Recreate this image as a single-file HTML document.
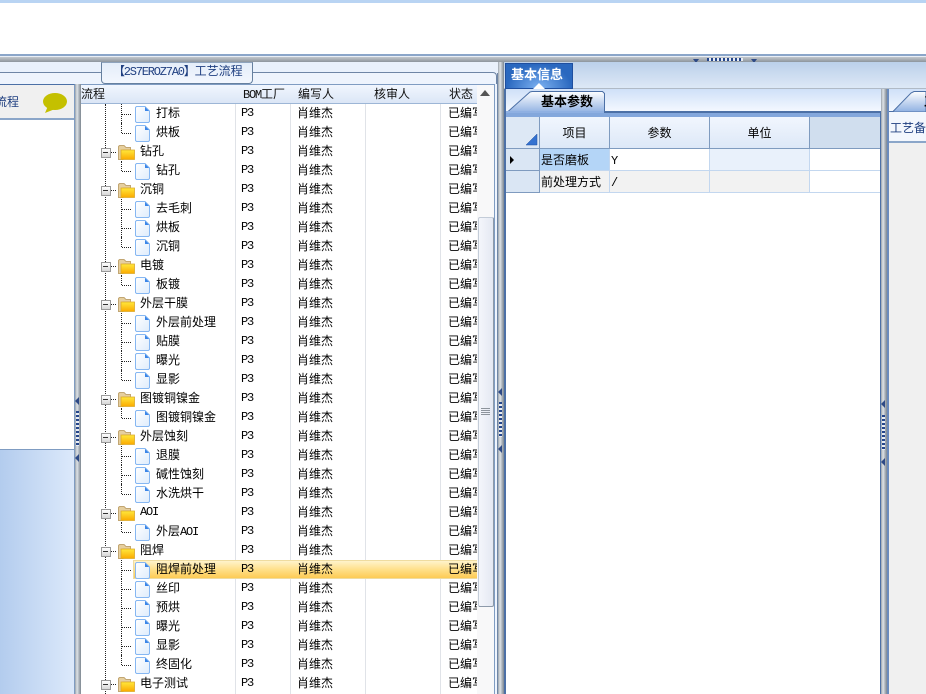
<!DOCTYPE html>
<html><head><meta charset="utf-8">
<style>
html,body{margin:0;padding:0;background:#fff}
body{width:926px;height:694px;position:relative;overflow:hidden;font:12px/19px "WenQuanYi Zen Hei","Noto Sans CJK SC",sans-serif;color:#000}
.a{position:absolute}
.m{font-family:"Liberation Mono",monospace;font-size:12px;letter-spacing:-1.2px}
#rows{left:0;top:104px;width:477px;height:590px;overflow:hidden;clip-path:inset(0 0 0 81px);background:#fff}
.r{position:relative;height:19px;white-space:nowrap}
.r>*{position:absolute}
.r svg{overflow:visible}
.n{top:-1px}
.r.d .n,.r.l .n{left:156px}
.r.f .n{left:140px}
.p{left:241px;top:0;font-family:"Liberation Mono",monospace;font-size:12px;letter-spacing:-1.2px}
.w{left:297px;top:-1px}
.s{left:448px;top:-1px}
.r.d svg,.r.l svg{left:135px;top:2px;width:15px;height:17px}
.r.f svg{left:118px;top:3px;width:17px;height:15px}
.r.d::before{content:"";position:absolute;left:121px;top:0;height:19px;border-left:1px dotted #222}
.r.l::before{content:"";position:absolute;left:121px;top:0;height:10px;border-left:1px dotted #222}
.r.d::after,.r.l::after{content:"";position:absolute;left:122px;top:10px;width:9px;border-top:1px dotted #222}
.r.f::before{content:"";position:absolute;left:101px;top:6px;width:8px;height:8px;border:1px solid #9a9a9a;background:linear-gradient(#fff,#d8d8d8);z-index:1}
.r.f::after{content:"";position:absolute;left:111px;top:10px;width:5px;border-top:1px dotted #222}
.r.f b{left:103px;top:10px;width:5px;height:1px;background:#333;z-index:2}
.hl{left:133px;top:0;width:344px;height:19px;background:linear-gradient(#fff3cc,#ffe08a 50%,#fdcb55);border:solid #efdca0;border-width:1px 0 1px 1px;box-sizing:border-box}
.sep{top:104px;width:1px;height:590px;background:#e0e3e8}
.hd{top:85px;height:18px;background:linear-gradient(#f1f6fe,#dbe6f6);border-bottom:1px solid #9db6d6;border-right:1px solid #9db6d6;line-height:17px;text-align:center;color:#111}
.split{background:linear-gradient(90deg,#9aa3ac,#dfe3e7 35%,#a8b0b8 70%,#7d8790)}
.dots{width:3px;background:repeating-linear-gradient(#24468c 0 2px,#e8edf4 2px 4px)}
.cell{border-right:1px solid #c3d7ef;border-bottom:1px solid #c3d7ef;box-sizing:border-box;line-height:21px;padding-left:1px}
.gh{background:linear-gradient(#f1f6fe,#dde8f7);border-right:1px solid #7f9bbf;border-bottom:1px solid #7f9bbf;box-sizing:border-box;text-align:center;line-height:31px}
</style></head>
<body>
<svg width="0" height="0" style="position:absolute">
<defs>
<linearGradient id="dg" x1="0" y1="0" x2="1" y2="1"><stop offset="0" stop-color="#fff"/><stop offset="1" stop-color="#deecfc"/></linearGradient>
<linearGradient id="fg" x1="0" y1="0" x2="0" y2="1"><stop offset="0" stop-color="#ffe83c"/><stop offset="1" stop-color="#fbaa00"/></linearGradient>
<linearGradient id="tb" x1="0" y1="0" x2="0" y2="1"><stop offset="0" stop-color="#fff"/><stop offset="1" stop-color="#8fb0e2"/></linearGradient>
<symbol id="doc" viewBox="0 0 15 17"><path d="M1.500.5H10L14.500 5V15.500L13.500 16.500H1.500L.5 15.500V1.500Z" fill="url(#dg)" stroke="#86b7f2"/><path d="M10 1V5H14Z" fill="#3b86e8"/></symbol>
<symbol id="fol" viewBox="0 0 17 15"><path d="M.5 14.500V1.500L1.500.5H6L8 2.500H12.500V5H5V14.500Z" fill="#e6cf9f" stroke="#c2a672"/><path d="M3 5H16.500V14.500H3Z" fill="url(#fg)" stroke="#dba92a" stroke-width=".8"/></symbol>
</defs></svg>

<!-- top strip -->
<div class="a" style="left:0;top:0;width:926px;height:3px;background:#b9d4f3"></div>
<div class="a" style="left:0;top:54px;width:926px;height:2px;background:#8ba6c9"></div>
<div class="a" style="left:0;top:56px;width:926px;height:1px;background:#e8eef6"></div>
<div class="a" style="left:0;top:57px;width:926px;height:5px;background:linear-gradient(#c2c7cc,#8d959d)"></div>
<div class="a" style="left:693px;top:59px;border:solid transparent;border-width:4px 3px 0;border-top-color:#2e4a86"></div>
<div class="a" style="left:707px;top:58px;width:36px;height:3px;background:repeating-linear-gradient(90deg,#24468c 0 2px,#e8edf4 2px 4px)"></div>
<div class="a" style="left:751px;top:59px;border:solid transparent;border-width:4px 3px 0;border-top-color:#2e4a86"></div>

<!-- mid panel background -->
<div class="a" style="left:0;top:62px;width:498px;height:632px;background:#e9f1fc"></div>
<div class="a" style="left:0;top:72px;width:497px;height:12px;border-top:1px solid #6f86a6;border-right:1px solid #6f86a6;border-top-right-radius:4px;box-sizing:border-box;background:#eef4fd"></div>
<div class="a" style="left:101px;top:62px;width:152px;height:22px;box-sizing:border-box;border:1px solid #66809f;border-top-color:#8ea3bd;border-radius:0 0 4px 4px;background:linear-gradient(#e4edf9,#f3f7fe);color:#1f3f80;line-height:15px;padding-left:11px;white-space:nowrap;z-index:3"><span class="m">【2S7EROZ7A0】</span>工艺流程</div>

<!-- left panel -->
<div class="a" style="left:0;top:84px;width:75px;height:366px;background:#fff;border-right:1px solid #7f9cc2;box-sizing:border-box;border-top:1px solid #4c70a6"></div>
<div class="a" style="left:0;top:85px;width:74px;height:33px;background:#f0f0f0;border-bottom:2px solid #8ba6c9;box-sizing:content-box;color:#1f3f80;line-height:33px;overflow:hidden"><span class="a" style="left:-5px;top:0">流程</span></div>
<svg class="a" style="left:42px;top:92px" width="26" height="22" viewBox="0 0 26 22"><ellipse cx="13" cy="9.500" rx="12" ry="8.500" fill="#c4c000"/><path d="M6 14L3 21L13 17Z" fill="#c4c000"/></svg>
<div class="a" style="left:0;top:449px;width:74px;height:1px;background:#7f9cc2"></div>
<div class="a" style="left:0;top:450px;width:74px;height:244px;background:linear-gradient(90deg,#b3ccee,#dce9fb)"></div>
<div class="a" style="left:74px;top:450px;width:1px;height:244px;background:#7f9cc2"></div>
<div class="a split" style="left:75px;top:84px;width:6px;height:610px"></div>
<div class="a" style="left:75px;top:397px;border:solid transparent;border-width:4px 4px 4px 0;border-right-color:#2e4a86"></div>
<div class="a dots" style="left:76px;top:411px;height:35px"></div>
<div class="a" style="left:75px;top:454px;border:solid transparent;border-width:4px 4px 4px 0;border-right-color:#2e4a86"></div>

<!-- grid header -->
<div class="a" style="left:81px;top:84px;width:413px;height:1px;background:#7f9cc2"></div>
<div class="a hd" style="left:81px;width:155px;text-align:left">流程</div>
<div class="a hd" style="left:236px;width:55px;text-align:left;text-indent:7px;white-space:nowrap"><span class="m">BOM</span>工厂</div>
<div class="a hd" style="left:291px;width:75px;text-align:left;text-indent:7px">编写人</div>
<div class="a hd" style="left:366px;width:75px;text-align:left;text-indent:8px">核审人</div>
<div class="a hd" style="left:441px;width:36px;border-right:0;text-align:left;text-indent:8px">状态</div>

<!-- rows -->
<div class="a" id="rows">
<div class="a" style="left:105px;top:0;height:590px;border-left:1px dotted #222"></div>
<div class="r d"><svg><use href="#doc"/></svg><span class="n">打标</span><span class="p">P3</span><span class="w">肖维杰</span><span class="s">已编写</span></div>
<div class="r l"><svg><use href="#doc"/></svg><span class="n">烘板</span><span class="p">P3</span><span class="w">肖维杰</span><span class="s">已编写</span></div>
<div class="r f"><b></b><svg><use href="#fol"/></svg><span class="n">钻孔</span><span class="p">P3</span><span class="w">肖维杰</span><span class="s">已编写</span></div>
<div class="r l"><svg><use href="#doc"/></svg><span class="n">钻孔</span><span class="p">P3</span><span class="w">肖维杰</span><span class="s">已编写</span></div>
<div class="r f"><b></b><svg><use href="#fol"/></svg><span class="n">沉铜</span><span class="p">P3</span><span class="w">肖维杰</span><span class="s">已编写</span></div>
<div class="r d"><svg><use href="#doc"/></svg><span class="n">去毛刺</span><span class="p">P3</span><span class="w">肖维杰</span><span class="s">已编写</span></div>
<div class="r d"><svg><use href="#doc"/></svg><span class="n">烘板</span><span class="p">P3</span><span class="w">肖维杰</span><span class="s">已编写</span></div>
<div class="r l"><svg><use href="#doc"/></svg><span class="n">沉铜</span><span class="p">P3</span><span class="w">肖维杰</span><span class="s">已编写</span></div>
<div class="r f"><b></b><svg><use href="#fol"/></svg><span class="n">电镀</span><span class="p">P3</span><span class="w">肖维杰</span><span class="s">已编写</span></div>
<div class="r l"><svg><use href="#doc"/></svg><span class="n">板镀</span><span class="p">P3</span><span class="w">肖维杰</span><span class="s">已编写</span></div>
<div class="r f"><b></b><svg><use href="#fol"/></svg><span class="n">外层干膜</span><span class="p">P3</span><span class="w">肖维杰</span><span class="s">已编写</span></div>
<div class="r d"><svg><use href="#doc"/></svg><span class="n">外层前处理</span><span class="p">P3</span><span class="w">肖维杰</span><span class="s">已编写</span></div>
<div class="r d"><svg><use href="#doc"/></svg><span class="n">贴膜</span><span class="p">P3</span><span class="w">肖维杰</span><span class="s">已编写</span></div>
<div class="r d"><svg><use href="#doc"/></svg><span class="n">曝光</span><span class="p">P3</span><span class="w">肖维杰</span><span class="s">已编写</span></div>
<div class="r l"><svg><use href="#doc"/></svg><span class="n">显影</span><span class="p">P3</span><span class="w">肖维杰</span><span class="s">已编写</span></div>
<div class="r f"><b></b><svg><use href="#fol"/></svg><span class="n">图镀铜镍金</span><span class="p">P3</span><span class="w">肖维杰</span><span class="s">已编写</span></div>
<div class="r l"><svg><use href="#doc"/></svg><span class="n">图镀铜镍金</span><span class="p">P3</span><span class="w">肖维杰</span><span class="s">已编写</span></div>
<div class="r f"><b></b><svg><use href="#fol"/></svg><span class="n">外层蚀刻</span><span class="p">P3</span><span class="w">肖维杰</span><span class="s">已编写</span></div>
<div class="r d"><svg><use href="#doc"/></svg><span class="n">退膜</span><span class="p">P3</span><span class="w">肖维杰</span><span class="s">已编写</span></div>
<div class="r d"><svg><use href="#doc"/></svg><span class="n">碱性蚀刻</span><span class="p">P3</span><span class="w">肖维杰</span><span class="s">已编写</span></div>
<div class="r l"><svg><use href="#doc"/></svg><span class="n">水洗烘干</span><span class="p">P3</span><span class="w">肖维杰</span><span class="s">已编写</span></div>
<div class="r f"><b></b><svg><use href="#fol"/></svg><span class="n m" style="line-height:19px;top:0">AOI</span><span class="p">P3</span><span class="w">肖维杰</span><span class="s">已编写</span></div>
<div class="r l"><svg><use href="#doc"/></svg><span class="n">外层<span class="m">AOI</span></span><span class="p">P3</span><span class="w">肖维杰</span><span class="s">已编写</span></div>
<div class="r f"><b></b><svg><use href="#fol"/></svg><span class="n">阻焊</span><span class="p">P3</span><span class="w">肖维杰</span><span class="s">已编写</span></div>
<div class="r d"><span class="hl"></span><svg><use href="#doc"/></svg><span class="n">阻焊前处理</span><span class="p">P3</span><span class="w">肖维杰</span><span class="s">已编写</span></div>
<div class="r d"><svg><use href="#doc"/></svg><span class="n">丝印</span><span class="p">P3</span><span class="w">肖维杰</span><span class="s">已编写</span></div>
<div class="r d"><svg><use href="#doc"/></svg><span class="n">预烘</span><span class="p">P3</span><span class="w">肖维杰</span><span class="s">已编写</span></div>
<div class="r d"><svg><use href="#doc"/></svg><span class="n">曝光</span><span class="p">P3</span><span class="w">肖维杰</span><span class="s">已编写</span></div>
<div class="r d"><svg><use href="#doc"/></svg><span class="n">显影</span><span class="p">P3</span><span class="w">肖维杰</span><span class="s">已编写</span></div>
<div class="r l"><svg><use href="#doc"/></svg><span class="n">终固化</span><span class="p">P3</span><span class="w">肖维杰</span><span class="s">已编写</span></div>
<div class="r f"><b></b><svg><use href="#fol"/></svg><span class="n">电子测试</span><span class="p">P3</span><span class="w">肖维杰</span><span class="s">已编写</span></div>
</div>
<div class="a sep" style="left:235px;height:456px"></div>
<div class="a sep" style="left:235px;top:579px;height:115px"></div>
<div class="a sep" style="left:290px;height:456px"></div>
<div class="a sep" style="left:290px;top:579px;height:115px"></div>
<div class="a sep" style="left:365px;height:456px"></div>
<div class="a sep" style="left:365px;top:579px;height:115px"></div>
<div class="a sep" style="left:440px;height:456px"></div>
<div class="a sep" style="left:440px;top:579px;height:115px"></div>

<!-- scrollbar -->
<div class="a" style="left:477px;top:85px;width:17px;height:609px;background:#f8f8f9"></div>
<div class="a" style="left:480px;top:90px;border:solid transparent;border-width:0 5px 6px;border-bottom-color:#555"></div>
<div class="a" style="left:478px;top:217px;width:16px;height:390px;box-sizing:border-box;border:1px solid #8d9aaa;border-top-color:#c3ccd8;border-left-color:#c3ccd8;border-radius:2px;background:linear-gradient(90deg,#f4f6fb,#e4e8f2)"></div>
<div class="a" style="left:481px;top:408px;width:9px;height:7px;background:repeating-linear-gradient(#8d949c 0 1px,transparent 1px 2px)"></div>
<div class="a" style="left:494px;top:84px;width:1px;height:610px;background:#7f9cc2"></div>
<div class="a" style="left:495px;top:84px;width:2px;height:610px;background:#eef4fd"></div>
<div class="a" style="left:497px;top:73px;width:1px;height:621px;background:#6f86a6"></div>
<div class="a split" style="left:498px;top:62px;width:6px;height:632px"></div>
<div class="a" style="left:504px;top:89px;width:2px;height:605px;background:#4c70a6"></div>
<div class="a" style="left:498px;top:388px;border:solid transparent;border-width:4px 4px 4px 0;border-right-color:#2e4a86"></div>
<div class="a dots" style="left:499px;top:402px;height:35px"></div>
<div class="a" style="left:498px;top:445px;border:solid transparent;border-width:4px 4px 4px 0;border-right-color:#2e4a86"></div>

<!-- right tab strip -->
<div class="a" style="left:504px;top:62px;width:422px;height:27px;background:linear-gradient(#bbd0ea,#dde8f6);border-bottom:1px solid #b0bac6;box-sizing:border-box"></div>
<div class="a" style="left:505px;top:63px;width:68px;height:26px;box-sizing:border-box;border:1px solid #1f4f9f;background:radial-gradient(ellipse at 50% 100%,#7db2f2,#2a68bf 70%);color:#fff;font-weight:bold;font-size:13px;line-height:20px;padding-left:5px;white-space:nowrap">基本信息</div>
<div class="a" style="left:533px;top:83px;border:solid transparent;border-width:0 6px 6px;border-bottom-color:#fff"></div>
<div class="a" style="left:506px;top:89px;width:375px;height:23px;background:linear-gradient(#cfe0f8,#f5f9ff)"></div>

<!-- right grid -->
<div class="a" style="left:506px;top:111px;width:375px;height:2px;background:#4c70a6"></div>
<div class="a" style="left:506px;top:113px;width:374px;height:4px;background:#83a7dc"></div>
<svg class="a" style="left:505px;top:91px" width="102" height="22" viewBox="0 0 102 22"><path d="M1 20.500H3L25 1L27 .5H97.500L99.500 2.500V22H1Z" fill="url(#tb)" stroke="#4c70a6"/><rect x="1" y="20" width="98" height="2" fill="#8fb0e2"/></svg>
<div class="a" style="left:541px;top:91px;font-weight:bold;font-size:13px;line-height:20px;white-space:nowrap">基本参数</div>
<div class="a" style="left:880px;top:111px;width:1px;height:583px;background:#4c70a6"></div>
<div class="a" style="left:506px;top:117px;width:374px;height:577px;background:#fff"></div>
<div class="a" style="left:506px;top:117px;width:34px;height:32px;background:#dde8f5;border-right:1px solid #7f9bbf;border-bottom:1px solid #7f9bbf;box-sizing:border-box"></div>
<svg class="a" style="left:526px;top:134px" width="12" height="12"><path d="M11 0V11H0Z" fill="#3472d0" stroke="#1f4f9f" stroke-width=".5"/></svg>
<div class="a gh" style="left:540px;top:117px;width:70px;height:32px">项目</div>
<div class="a gh" style="left:610px;top:117px;width:100px;height:32px">参数</div>
<div class="a gh" style="left:710px;top:117px;width:100px;height:32px">单位</div>
<div class="a" style="left:810px;top:117px;width:70px;height:32px;background:#d0deee;border-bottom:1px solid #7f9bbf;box-sizing:border-box"></div>
<div class="a" style="left:506px;top:149px;width:34px;height:22px;background:#dae6f4;border-right:1px solid #7f9bbf;border-bottom:1px solid #7f9bbf;box-sizing:border-box"></div>
<div class="a" style="left:506px;top:171px;width:34px;height:22px;background:#dae6f4;border-right:1px solid #7f9bbf;border-bottom:1px solid #7f9bbf;box-sizing:border-box"></div>
<div class="a" style="left:510px;top:156px;border:solid transparent;border-width:4px 0 4px 4px;border-left-color:#000"></div>
<div class="a cell" style="left:540px;top:149px;width:70px;height:22px;background:#b4d5f7;white-space:nowrap">是否磨板</div>
<div class="a cell" style="left:610px;top:149px;width:100px;height:22px;background:#fff"><span class="m">Y</span></div>
<div class="a cell" style="left:710px;top:149px;width:100px;height:22px;background:#e9f1fb"></div>
<div class="a cell" style="left:810px;top:149px;width:70px;height:22px;background:#fff;border-right:0"></div>
<div class="a cell" style="left:540px;top:171px;width:70px;height:22px;background:#f2f2f2;white-space:nowrap;overflow:hidden">前处理方式</div>
<div class="a cell" style="left:610px;top:171px;width:100px;height:22px;background:#f2f2f2"><span class="m">/</span></div>
<div class="a cell" style="left:710px;top:171px;width:100px;height:22px;background:#f2f2f2"></div>
<div class="a cell" style="left:810px;top:171px;width:70px;height:22px;background:#fff;border-right:0"></div>

<!-- far right -->
<div class="a split" style="left:881px;top:89px;width:6px;height:605px"></div>
<div class="a" style="left:887px;top:89px;width:2px;height:605px;background:#6a8bbd"></div>
<div class="a" style="left:881px;top:400px;border:solid transparent;border-width:4px 4px 4px 0;border-right-color:#2e4a86"></div>
<div class="a dots" style="left:882px;top:415px;height:35px"></div>
<div class="a" style="left:881px;top:458px;border:solid transparent;border-width:4px 4px 4px 0;border-right-color:#2e4a86"></div>
<div class="a" style="left:889px;top:89px;width:37px;height:23px;background:linear-gradient(#cfe0f8,#f5f9ff)"></div>
<svg class="a" style="left:889px;top:91px" width="37" height="21" viewBox="0 0 37 21"><path d="M0 20.500H4L22 2L25 .5H37V21H0Z" fill="url(#tb)" stroke="#4c70a6"/></svg>
<div class="a" style="left:924px;top:91px;width:2px;overflow:hidden;font-weight:bold;font-size:13px;line-height:20px">工</div>
<div class="a" style="left:889px;top:112px;width:37px;height:31px;background:#f3f7fd;border-bottom:2px solid #8ba6c9;box-sizing:border-box;color:#1f3f80;line-height:32px;overflow:hidden;white-space:nowrap;padding-left:1px">工艺备</div>
<div class="a" style="left:889px;top:143px;width:37px;height:551px;background:#f0f0f0"></div>
</body></html>
